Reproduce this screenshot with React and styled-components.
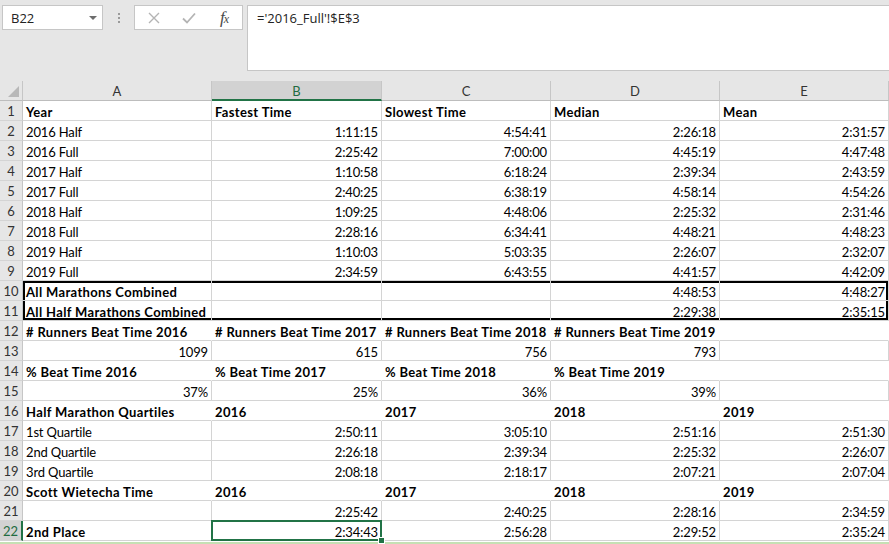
import React from "react";
import styled, { createGlobalStyle } from "styled-components";

const Global = createGlobalStyle`
  html, body {
    margin: 0;
    padding: 0;
    background: #ffffff;
    overflow: hidden;
  }
  body {
    font-family: Lato, "Open Sans", sans-serif;
  }
`;

const Page = styled.div`
  width: 889px;
  height: 544px;
  display: flex;
  flex-direction: column;
  background: #ffffff;
  overflow: hidden;
`;

const Toolbar = styled.div`
  height: 81px;
  flex: none;
  background: #e6e6e6;
  display: flex;
  align-items: flex-start;
  padding: 5px 0 0 2px;
  box-sizing: border-box;
`;

const NameBox = styled.div`
  width: 101px;
  height: 25px;
  box-sizing: border-box;
  background: #ffffff;
  border: 1px solid #c6c6c6;
  display: flex;
  align-items: center;
  justify-content: space-between;
  padding: 0 5px 0 8px;
  font-size: 13px;
  color: #222;
  font-family: "Open Sans", Lato, sans-serif;
`;

const Caret = styled.span`
  width: 0;
  height: 0;
  border-left: 4px solid transparent;
  border-right: 4px solid transparent;
  border-top: 4px solid #6d6d6d;
`;

const Grip = styled.div`
  width: 31px;
  height: 25px;
  display: flex;
  flex-direction: column;
  align-items: center;
  justify-content: center;
  gap: 2px;
`;

const Dot = styled.span`
  width: 2px;
  height: 2px;
  background: #9a9a9a;
`;

const FuncBox = styled.div`
  width: 109px;
  height: 25px;
  box-sizing: border-box;
  background: #ffffff;
  border: 1px solid #c6c6c6;
  display: flex;
  align-items: center;
  padding: 0 0 0 13px;
  gap: 22px;
`;

const Fx = styled.span`
  font-family: "Liberation Serif", serif;
  font-style: italic;
  font-size: 17px;
  color: #4a4a4a;
  margin-left: 2px;
  letter-spacing: -1px;
  line-height: 1;

  sub {
    font-size: 12px;
    vertical-align: 0;
    position: relative;
    top: 0;
  }
`;

const Formula = styled.div`
  margin-left: 4px;
  flex: 1;
  height: 66px;
  box-sizing: border-box;
  background: #ffffff;
  border: 1px solid #c6c6c6;
  border-right: none;
  padding: 3px 0 0 9px;
  font-family: "Open Sans", Lato, sans-serif;
  font-size: 13px;
  color: #222;
`;

const Sheet = styled.div`
  display: grid;
  grid-template-columns: 23px 189px 170px 169px 169px 169px;
  grid-auto-rows: 20px;
  font-family: Lato, "Open Sans", sans-serif;
  font-size: 13px;
  color: #000;
`;

const Corner = styled.div`
  background: #e6e6e6;
  border-right: 1px solid #c6c6c6;
  border-bottom: 1px solid #bdbdbd;
  box-sizing: border-box;
  display: flex;
  align-items: flex-end;
  justify-content: flex-end;
  padding: 0 3px 3px 0;
`;

const ColHead = styled.div`
  box-sizing: border-box;
  background: ${(p) => (p.$active ? "#d2d2d2" : "#e6e6e6")};
  color: ${(p) => (p.$active ? "#1f6b41" : "#333")};
  border-right: 1px solid #c6c6c6;
  border-bottom: ${(p) => (p.$active ? "2px solid #217346" : "1px solid #bdbdbd")};
  display: flex;
  align-items: center;
  justify-content: center;
  padding-top: 1px;
  font-size: 13px;
`;

const RowHead = styled.div`
  box-sizing: border-box;
  background: ${(p) => (p.$active ? "#d2d2d2" : "#e6e6e6")};
  color: ${(p) => (p.$active ? "#1f6b41" : "#333")};
  border-right: ${(p) => (p.$active ? "2px solid #217346" : "1px solid #c6c6c6")};
  border-bottom: 1px solid #d4d4d4;
  display: flex;
  align-items: center;
  justify-content: center;
  padding-top: 1px;
  font-size: 13px;
`;

const edgeShadow = (edges = "") => {
  const list = [];
  if (edges.includes("t")) list.push("inset 0 2px 0 #000");
  if (edges.includes("b")) list.push("inset 0 -2px 0 #000");
  if (edges.includes("l")) list.push("inset 2px 0 0 #000");
  if (edges.includes("r")) list.push("inset -2px 0 0 #000");
  return list.length ? list.join(", ") : "none";
};

const Cell = styled.div`
  position: relative;
  box-sizing: border-box;
  border-right: 1px solid ${(p) => (p.$fill ? "#ffffff" : "#d4d4d4")};
  border-bottom: 1px solid #d4d4d4;
  padding: 2px 3px 0 3px;
  display: flex;
  align-items: center;
  justify-content: ${(p) => (p.$right ? "flex-end" : "flex-start")};
  font-weight: ${(p) => (p.$bold ? 700 : 400)};
  letter-spacing: ${(p) => (p.$bold ? "0.35px" : "-0.15px")};
  white-space: nowrap;
  box-shadow: ${(p) => edgeShadow(p.$edges)};

  ${(p) =>
    p.$sel &&
    `
    &::after {
      content: "";
      position: absolute;
      left: -1px;
      top: -1px;
      right: -1px;
      bottom: -1px;
      border: 2px solid #217346;
      pointer-events: none;
    }
    &::before {
      content: "";
      position: absolute;
      right: -4px;
      bottom: -4px;
      width: 5px;
      height: 5px;
      background: #217346;
      border: 1px solid #fff;
      z-index: 2;
    }
  `}
`;

const Strip = styled.div`
  flex: 1;
  border-top: 1px solid #ffffff;
  background: #c6e0b4;
`;

const columns = ["A", "B", "C", "D", "E"];

const rows = [
  { bold: true, c: ["Year", "Fastest Time", "Slowest Time", "Median", "Mean"] },
  { c: ["2016 Half", "1:11:15", "4:54:41", "2:26:18", "2:31:57"] },
  { c: ["2016 Full", "2:25:42", "7:00:00", "4:45:19", "4:47:48"] },
  { c: ["2017 Half", "1:10:58", "6:18:24", "2:39:34", "2:43:59"] },
  { c: ["2017 Full", "2:40:25", "6:38:19", "4:58:14", "4:54:26"] },
  { c: ["2018 Half", "1:09:25", "4:48:06", "2:25:32", "2:31:46"] },
  { c: ["2018 Full", "2:28:16", "6:34:41", "4:48:21", "4:48:23"] },
  { c: ["2019 Half", "1:10:03", "5:03:35", "2:26:07", "2:32:07"] },
  { c: ["2019 Full", "2:34:59", "6:43:55", "4:41:57", "4:42:09"] },
  { boldA: true, box: "t", c: ["All Marathons Combined", "", "", "4:48:53", "4:48:27"] },
  { boldA: true, box: "b", c: ["All Half Marathons Combined", "", "", "2:29:38", "2:35:15"] },
  {
    bold: true,
    fill: true,
    c: ["# Runners Beat Time 2016", "# Runners Beat Time 2017", "# Runners Beat Time 2018", "# Runners Beat Time 2019", ""],
  },
  { c: ["1099", "615", "756", "793", ""] },
  { bold: true, fill: true, c: ["% Beat Time 2016", "% Beat Time 2017", "% Beat Time 2018", "% Beat Time 2019", ""] },
  { c: ["37%", "25%", "36%", "39%", ""] },
  { bold: true, fill: true, c: ["Half Marathon Quartiles", "2016", "2017", "2018", "2019"] },
  { c: ["1st Quartile", "2:50:11", "3:05:10", "2:51:16", "2:51:30"] },
  { c: ["2nd Quartile", "2:26:18", "2:39:34", "2:25:32", "2:26:07"] },
  { c: ["3rd Quartile", "2:08:18", "2:18:17", "2:07:21", "2:07:04"] },
  { bold: true, fill: true, c: ["Scott Wietecha Time", "2016", "2017", "2018", "2019"] },
  { c: ["", "2:25:42", "2:40:25", "2:28:16", "2:34:59"] },
  { boldA: true, sel: 1, c: ["2nd Place", "2:34:43", "2:56:28", "2:29:52", "2:35:24"] },
];

const edgesFor = (row, col) => {
  if (!row.box) return "";
  let e = row.box;
  if (col === 0) e += "l";
  if (col === 4) e += "r";
  return e;
};

function CrossIcon() {
  return (
    <svg width="12" height="12" viewBox="0 0 12 12">
      <path d="M1 1 L11 11 M11 1 L1 11" stroke="#b4b4b4" strokeWidth="1.4" fill="none" />
    </svg>
  );
}

function CheckIcon() {
  return (
    <svg width="14" height="12" viewBox="0 0 14 12">
      <path d="M1 6.5 L5 10.5 L13 1.5" stroke="#b4b4b4" strokeWidth="1.8" fill="none" />
    </svg>
  );
}

function CornerTriangle() {
  return (
    <svg width="11" height="11" viewBox="0 0 11 11">
      <path d="M11 0 L11 11 L0 11 Z" fill="#b8b8b8" />
    </svg>
  );
}

export default function App() {
  return (
    <Page>
      <Global />
      <Toolbar>
        <NameBox>
          B22
          <Caret />
        </NameBox>
        <Grip>
          <Dot />
          <Dot />
          <Dot />
        </Grip>
        <FuncBox>
          <CrossIcon />
          <CheckIcon />
          <Fx>
            f<sub>x</sub>
          </Fx>
        </FuncBox>
        <Formula>='2016_Full'!$E$3</Formula>
      </Toolbar>
      <Sheet>
        <Corner>
          <CornerTriangle />
        </Corner>
        {columns.map((c) => (
          <ColHead key={c} $active={c === "B"}>
            {c}
          </ColHead>
        ))}
        {rows.map((row, r) => (
          <React.Fragment key={r}>
            <RowHead $active={r === 21}>{r + 1}</RowHead>
            {row.c.map((text, i) => {
              const bold = row.bold || (row.boldA && i === 0);
              const right = !bold && /^[\d:%]+$/.test(text);
              return (
                <Cell
                  key={i}
                  $bold={bold}
                  $right={right}
                  $fill={row.fill}
                  $edges={edgesFor(row, i)}
                  $sel={row.sel === i}
                >
                  {text}
                </Cell>
              );
            })}
          </React.Fragment>
        ))}
      </Sheet>
      <Strip />
    </Page>
  );
}
